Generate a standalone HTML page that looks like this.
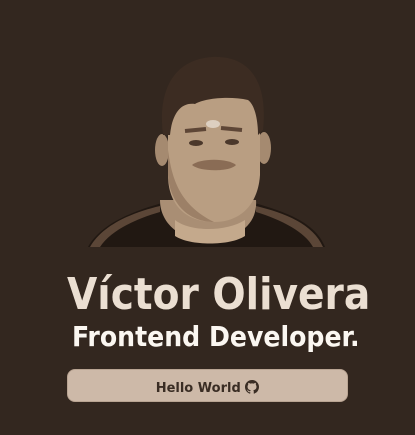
<!DOCTYPE html>
<html><head><meta charset="utf-8"><style>
html,body{margin:0;padding:0;background:#33271f;width:415px;height:435px;overflow:hidden}
svg{position:absolute;left:0;top:0}
.t{position:absolute;font-family:"DejaVu Sans Condensed","DejaVu Sans","Liberation Sans",sans-serif;font-weight:bold;white-space:nowrap}
#n{left:67px;top:270px;font-size:43.5px;color:#ebdfd2}
#r{left:72px;top:320px;font-size:28px;color:#fbf7f1}
#b{position:absolute;left:67px;top:369px;width:281px;height:33px;background:#cdb9a8;border-radius:8px;border:1px solid #b9a492;box-sizing:border-box}
#bt{position:absolute;left:0;width:100%;top:8px;text-align:center;font-family:"DejaVu Sans","Liberation Sans",sans-serif;font-weight:bold;font-size:13px;color:#3a2d24}
</style></head><body>
<svg width="415" height="435" viewBox="0 0 415 435">
 <path d="M88,247 C100,225 130,212 162,203 L255,203 C285,212 315,222 325,247 Z" fill="#211812"/>
 <path d="M90,247 C102,226 130,213 160,206 L160,212 C132,220 110,232 100,247Z" fill="#5b4637"/>
 <path d="M323,247 C313,224 285,213 256,206 L256,212 C282,220 305,232 313,247Z" fill="#5b4637"/>
 <path d="M160,200 L256,200 C258,222 240,240 208,240 C178,240 160,222 160,200Z" fill="#a98e74"/>
 <path d="M175,220 C190,232 226,232 245,220 L245,236 C230,246 190,246 175,236Z" fill="#c4a98c"/>
 <ellipse cx="162" cy="150" rx="7" ry="16" fill="#a58a70"/>
 <ellipse cx="264" cy="148" rx="7" ry="16" fill="#a58a70"/>
 <path d="M168,110 C168,95 185,90 214,90 C245,90 260,98 260,115 L260,175 C258,205 240,222 214,222 C186,222 168,205 168,175Z" fill="#b99e82"/>
 <path d="M168,150 C172,180 180,205 214,222 C190,222 170,205 168,175Z" fill="#9c8067"/>
 <path d="M192,165 C200,158 228,158 236,165 C230,172 200,172 192,165Z" fill="#8a6c55"/>
 <path d="M185,131 L206,129 M221,128 L242,130" stroke="#5e4636" stroke-width="4"/>
 <ellipse cx="196" cy="143" rx="7" ry="3" fill="#4b382b"/>
 <ellipse cx="232" cy="142" rx="7" ry="3" fill="#4b382b"/>
 <ellipse cx="213" cy="124" rx="7" ry="4" fill="#ddcfc0"/>
 <path d="M163,135 C158,95 170,60 212,57 C252,55 268,85 263,130 L258,135 C258,118 254,104 248,100 C230,96 205,98 195,104 C180,102 172,115 170,135Z" fill="#3c2c22"/>
</svg>
<div class="t" id="n">Víctor Olivera</div>
<div class="t" id="r">Frontend Developer.</div>
<div id="b"><div id="bt">Hello World <svg style="position:relative;top:2px" width="14" height="14" viewBox="0 0 16 16"><path fill="#3a2d24" d="M8 0C3.58 0 0 3.58 0 8c0 3.54 2.29 6.53 5.47 7.59.4.07.55-.17.55-.38v-1.33c-2.23.48-2.7-1.07-2.7-1.07-.36-.92-.89-1.17-.89-1.17-.73-.5.06-.49.06-.49.8.06 1.23.83 1.23.83.72 1.23 1.88.87 2.34.67.07-.52.28-.87.51-1.07-1.78-.2-3.65-.89-3.65-3.95 0-.87.31-1.59.82-2.15-.08-.2-.36-1.02.08-2.12 0 0 .67-.21 2.2.82a7.6 7.6 0 014 0c1.53-1.04 2.2-.82 2.2-.82.44 1.1.16 1.92.08 2.12.51.56.82 1.27.82 2.15 0 3.07-1.87 3.75-3.65 3.95.29.25.54.73.54 1.48v2.2c0 .21.15.46.55.38A8 8 0 0016 8c0-4.42-3.58-8-8-8z"/></svg></div></div>
</body></html>
